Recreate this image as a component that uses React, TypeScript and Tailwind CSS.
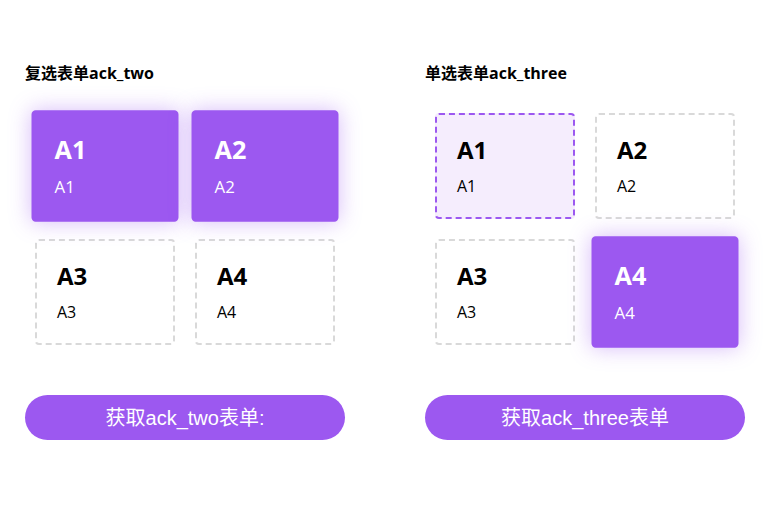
import { useState } from 'react'

const items = ['A1', 'A2', 'A3', 'A4']

function Card({ label, active, hover }: { label: string; active: boolean; hover?: boolean }) {
  const base =
    'm-[10px] h-[106px] w-[140px] rounded-[4px] border-2 pl-5 pt-[19px] transition-transform cursor-pointer'
  const look = active
    ? 'scale-105 border-[#9c58f0] bg-[#9c58f0] text-white shadow-[0_0_20px_rgba(156,88,240,0.4)]'
    : hover
      ? 'border-dashed border-[#9c58f0] bg-[#f5edfd] text-black'
      : 'border-dashed border-[#d9d9d9] bg-white text-black'
  return (
    <div className={`${base} ${look}`}>
      <div className="text-2xl leading-8 font-bold">{label}</div>
      <div className="mt-2 text-base leading-6">{label}</div>
    </div>
  )
}

function Section({
  title,
  button,
  selected,
  hover,
  onPick,
}: {
  title: string
  button: string
  selected: string[]
  hover?: string
  onPick: (v: string) => void
}) {
  return (
    <div className="w-[320px]">
      <h3 className="mb-5 text-base leading-5 font-bold text-black">{title}</h3>
      <div className="grid grid-cols-2">
        {items.map((it) => (
          <div key={it} onClick={() => onPick(it)}>
            <Card label={it} active={selected.includes(it)} hover={hover === it} />
          </div>
        ))}
      </div>
      <button className="mt-10 h-[45px] w-[320px] rounded-full bg-[#9c58f0] text-xl text-white font-['Liberation_Sans','Noto_Sans_CJK_SC',sans-serif]">
        {button}
      </button>
    </div>
  )
}

export default function App() {
  const [multi, setMulti] = useState<string[]>(['A1', 'A2'])
  const [single, setSingle] = useState('A4')

  return (
    <div className="min-h-screen bg-white font-['Open_Sans','Noto_Sans_CJK_SC',sans-serif]">
      <div className="flex gap-20 px-[25px] pt-[63px]">
        <Section
          title="复选表单ack_two"
          button="获取ack_two表单:"
          selected={multi}
          onPick={(v) =>
            setMulti((m) => (m.includes(v) ? m.filter((x) => x !== v) : [...m, v]))
          }
        />
        <Section
          title="单选表单ack_three"
          button="获取ack_three表单"
          selected={[single]}
          hover="A1"
          onPick={setSingle}
        />
      </div>
    </div>
  )
}
